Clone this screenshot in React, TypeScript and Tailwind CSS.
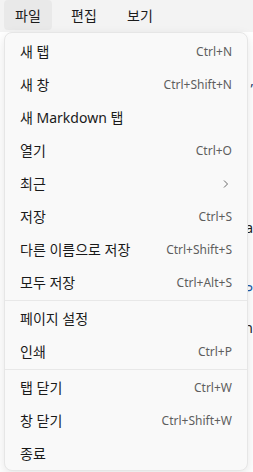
import React from "react";

type Item = { label: string; shortcut?: string; sub?: boolean } | "sep";

const items: Item[] = [
  { label: "새 탭", shortcut: "Ctrl+N" },
  { label: "새 창", shortcut: "Ctrl+Shift+N" },
  { label: "새 Markdown 탭" },
  { label: "열기", shortcut: "Ctrl+O" },
  { label: "최근", sub: true },
  { label: "저장", shortcut: "Ctrl+S" },
  { label: "다른 이름으로 저장", shortcut: "Ctrl+Shift+S" },
  { label: "모두 저장", shortcut: "Ctrl+Alt+S" },
  "sep",
  { label: "페이지 설정" },
  { label: "인쇄", shortcut: "Ctrl+P" },
  "sep",
  { label: "탭 닫기", shortcut: "Ctrl+W" },
  { label: "창 닫기", shortcut: "Ctrl+Shift+W" },
  { label: "종료" },
];

const font = {
  fontFamily: '"Segoe UI", "Noto Sans", "Noto Sans CJK KR", sans-serif',
};

export default function App() {
  return (
    <div
      className="relative w-[253px] h-[472px] overflow-hidden bg-white"
      style={font}
    >
      <div className="flex h-[32px] items-stretch gap-[8px] bg-[#f3f3f3] pl-[4px] pb-[2px] text-[14px] text-[#1b1b1b]">
        <div className="flex w-[48px] items-center justify-center rounded-[4px] bg-[#e9e9e9]">파일</div>
        <div className="flex w-[48px] items-center justify-center">편집</div>
        <div className="flex w-[48px] items-center justify-center">보기</div>
      </div>
      <div className="flex flex-col items-end text-[14px] text-[#1f3b6b]">
        <div className="mt-[46px] h-[16px]">’</div>
        <div className="mt-[123px] h-[16px] text-[#222]">a</div>
        <div className="mt-[46px] h-[16px] text-[#1e5aa8]">P</div>
        <div className="mt-[22px] h-[16px] text-[#222]">n</div>
      </div>

      <div className="absolute left-[4px] top-[32px] w-[244px] rounded-[8px] border border-[#e6e6e6] bg-[#f9f9f9] pt-[2px] shadow-[0_4px_12px_rgba(0,0,0,0.10)]">
        {items.map((it, i) =>
          it === "sep" ? (
            <div key={i} className="my-[1px] h-px bg-[#e8e8e8]" />
          ) : (
            <div
              key={i}
              className="flex h-[33px] items-center justify-between pl-[15px] pr-[15px]"
            >
              <span className="text-[14px] text-[#1a1a1a]">{it.label}</span>
              {it.shortcut && (
                <span className="text-[12px] text-[#5e5e5e]">{it.shortcut}</span>
              )}
              {it.sub && (
                <svg width="10" height="10" viewBox="0 0 10 10" className="mr-[1px]">
                  <path d="M3 1.5 L6.5 5 L3 8.5" fill="none" stroke="#6a6a6a" strokeWidth="1" />
                </svg>
              )}
            </div>
          )
        )}
      </div>
    </div>
  );
}
